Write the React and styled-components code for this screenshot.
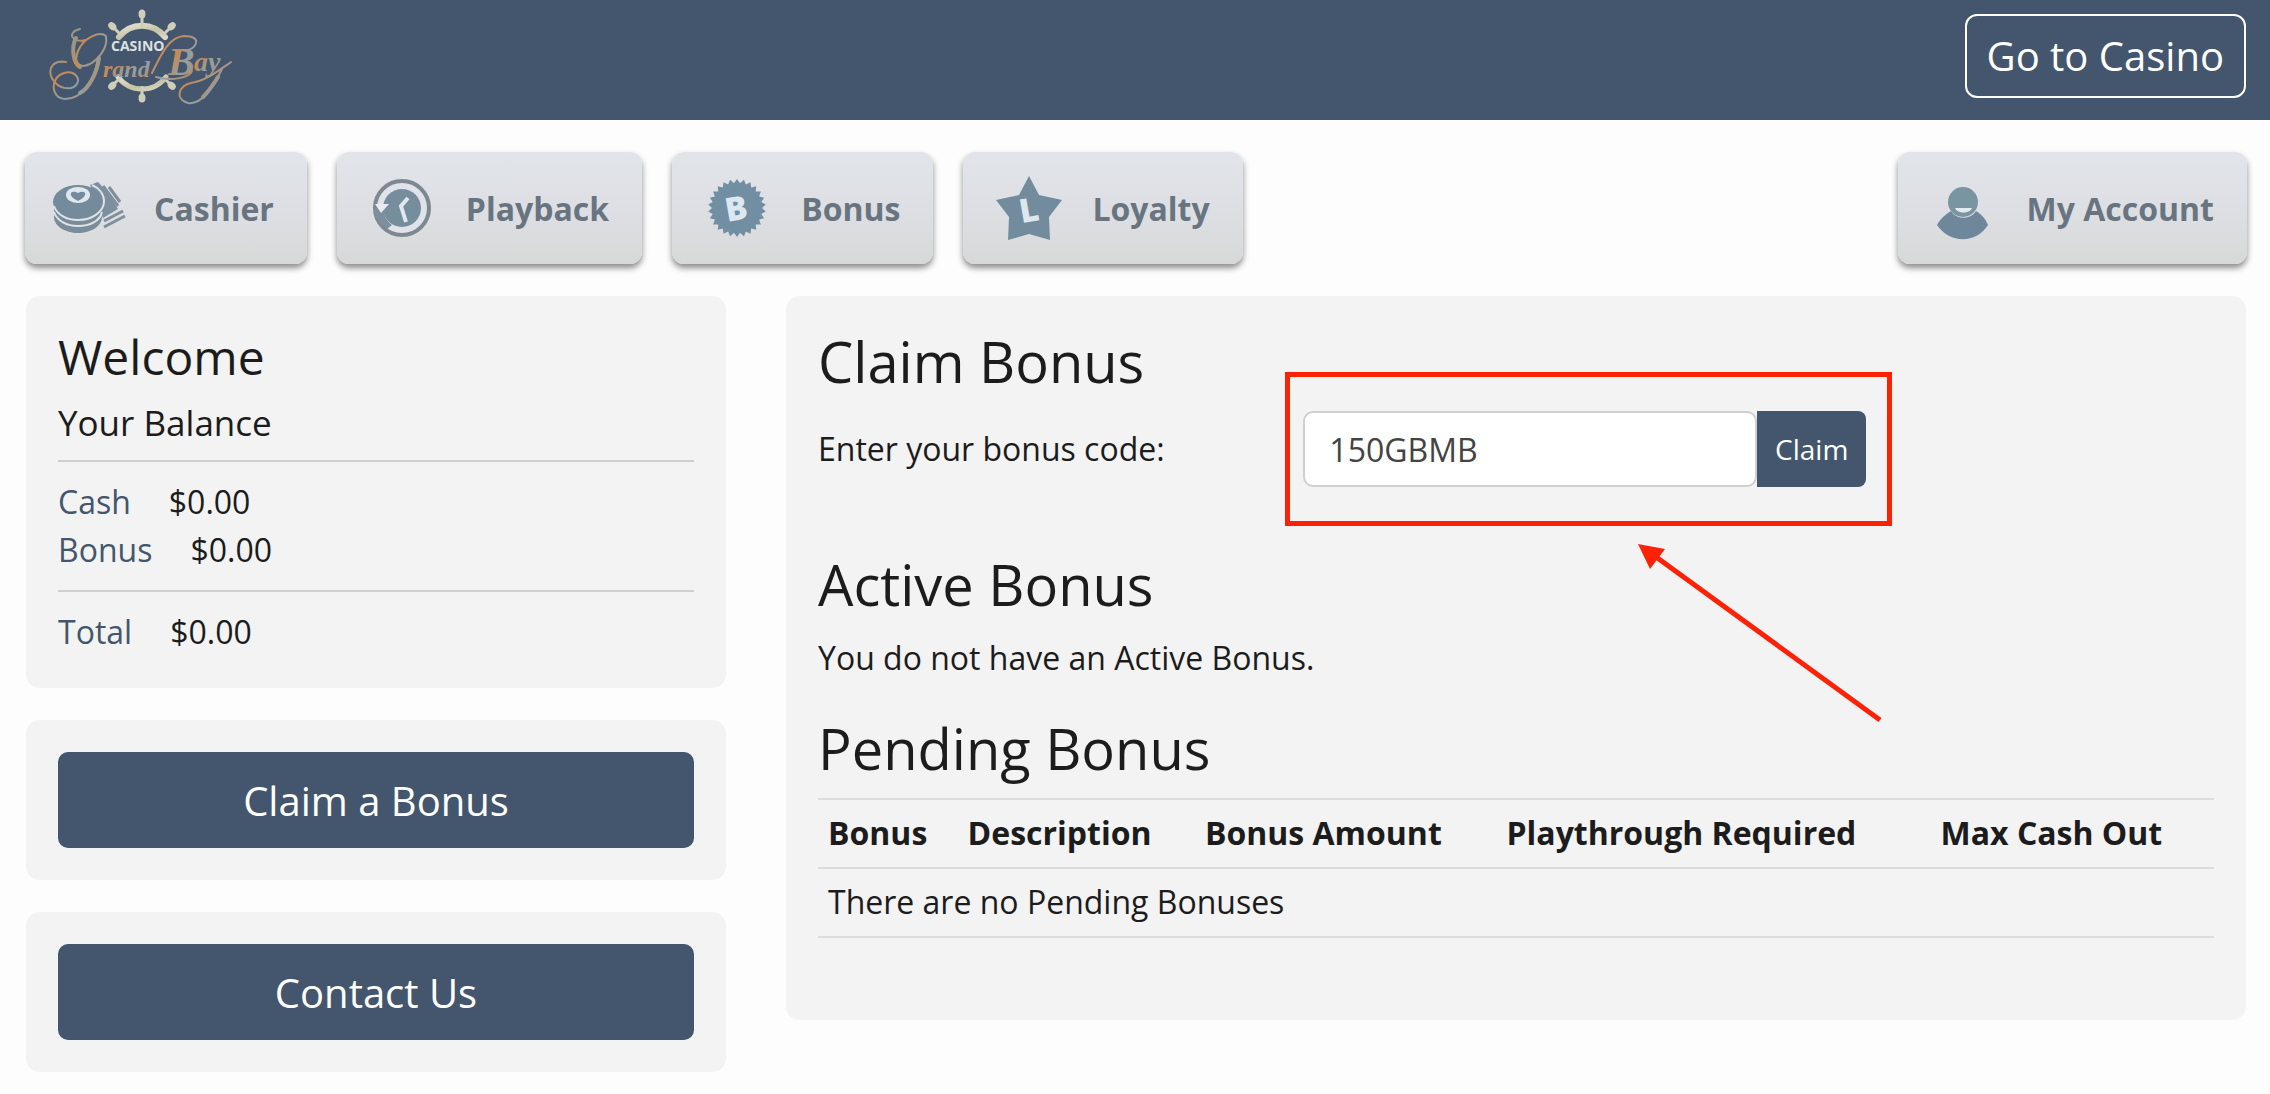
import React, { useState } from "react"

import styled, { createGlobalStyle } from "styled-components"

const navItems = [
  { label: "Cashier", icon: "cashier" },
  { label: "Playback", icon: "playback" },
  { label: "Bonus", icon: "bonus" },
  { label: "Loyalty", icon: "loyalty" },
]

const columns = [
  { label: "Bonus", width: "10%" },
  { label: "Description", width: "17%" },
  { label: "Bonus Amount", width: "21.6%" },
  { label: "Playthrough Required", width: "31.1%" },
  { label: "Max Cash Out", width: "20.3%" },
]

const getBadgePoints = (teeth, outer, inner) => {
  const points = []
  for (let i = 0; i < teeth * 2; i++) {
    const radius = i % 2 === 0 ? outer : inner
    const angle = (Math.PI * i) / teeth
    points.push(`${40 + radius * Math.sin(angle)},${40 - radius * Math.cos(angle)}`)
  }
  return points.join(" ")
}

const Logo = () => (
  <svg width="192" height="106" viewBox="44 2 192 106" role="img" aria-label="Casino Grand Bay">
    <defs>
      <linearGradient id="gold" x1="0" y1="0" x2="1" y2="1">
        <stop offset="0" stopColor="#8f9a90" />
        <stop offset="0.35" stopColor="#c58a5a" />
        <stop offset="0.6" stopColor="#8fa0a4" />
        <stop offset="1" stopColor="#c9854f" />
      </linearGradient>
      <linearGradient id="ivory" x1="0" y1="0" x2="1" y2="1">
        <stop offset="0" stopColor="#e6e3d6" />
        <stop offset="0.6" stopColor="#c3c3a4" />
        <stop offset="1" stopColor="#ded9c8" />
      </linearGradient>
    </defs>
    <g fill="none" stroke="url(#ivory)" strokeLinecap="round">
      <path d="M119 36 A29 29 0 0 1 165 36" strokeWidth="6" />
      <path d="M118 76 A30 30 0 0 0 166 76" strokeWidth="5" />
    </g>
    <g fill="#d0ceb8" stroke="#d0ceb8" strokeWidth="3">
      {[0, 45, 135, 180, 225, 315].map((angle) => (
        <g key={angle} transform={`rotate(${angle} 142 55)`}>
          <path d="M142 25 V14" />
          <ellipse cx="142" cy="13" rx="2" ry="3" />
        </g>
      ))}
    </g>
    <text x="111" y="50" fontFamily="Open Sans, sans-serif" fontWeight="700" fontSize="14" fill="#dfe0e0">
      CASINO
    </text>
    <g fill="none" stroke="url(#gold)" strokeLinecap="round">
      <path
        d="M80 28 C66 31 72 43 86 39 M106 35 C100 30 84 36 78 50 C73 62 80 68 90 63 C99 58 108 46 106 36"
        strokeWidth="2"
      />
      <path
        d="M98 57 C95 80 82 98 65 98 C50 97 50 76 64 72 C79 68 83 84 71 87 C57 89 48 76 51 67 C54 60 60 60 66 61"
        strokeWidth="2"
      />
      <path d="M76 37 C71 46 73 62 80 66 M99 57 C97 73 88 88 80 92" strokeWidth="4" />
      <path d="M152 72 C160 56 168 36 184 35 C202 35 198 46 186 50 M156 76 C172 81 190 76 192 70" strokeWidth="2" />
      <path d="M222 68 C213 86 202 104 188 102 C174 98 179 84 191 82 C206 80 218 70 231 61" strokeWidth="2" />
      <path d="M218 76 C213 84 208 91 203 96" strokeWidth="4" />
    </g>
    <g fill="url(#gold)" fontFamily="Liberation Serif, serif" fontStyle="italic" fontWeight="700">
      <text x="103" y="76" fontSize="24">
        rand
      </text>
      <text x="168" y="74" fontSize="40">
        B
      </text>
      <text x="194" y="70" fontSize="28">
        ay
      </text>
    </g>
  </svg>
)

const CashierIcon = () => (
  <>
    <path d="M40 17 L48 14 L58 25 L68 41 L53 50 Z" fill="#7b8f9e" />
    <path
      d="M53 18 L68 38 M59 19 L70 34 M54 53 L73 43 M54 59 L75 48"
      stroke="#7f8f9b"
      strokeWidth="3"
      fill="none"
    />
    <path d="M4 36 V49 C4 58 15 65 28 65 C41 65 52 58 52 49 V36 Z" fill="#7a8c99" />
    <path d="M4 44 C7 53 17 58 28 58 C40 58 50 53 52 44" fill="none" stroke="#dfe3e8" strokeWidth="2" />
    <ellipse cx="28" cy="34" rx="25" ry="17" fill="#748b9b" />
    <path d="M4 38 C7 47 17 52 28 52 C42 52 54 44 54 33 C54 26 49 20 42 17" fill="none" stroke="#dfe3e8" strokeWidth="2" />
    <ellipse cx="28" cy="27" rx="12" ry="8" fill="#dfe6ed" />
    <path d="M28 33 C16 27 21 21 28 25 C35 21 40 27 28 33 Z" fill="#748b9b" />
  </>
)

const PlaybackIcon = () => (
  <>
    <circle cx="40" cy="40" r="27" fill="#e0e3ea" stroke="#7d8891" strokeWidth="4" />
    <circle cx="40" cy="40" r="19" fill="#768d9e" />
    <path d="M12 42 L18 36 L25 42 L22 44 C23 50 26 54 30 57 L25 61 C18 57 14 50 12 44 Z" fill="#7d8f9c" />
    <path d="M13 36 L27 36 L19 45 Z" fill="#e8ecf1" />
    <path d="M46 30 L39 38 L44 54" fill="none" stroke="#dfe8f0" strokeWidth="4" />
  </>
)

const BonusIcon = () => (
  <>
    <polygon points={getBadgePoints(26, 29, 25)} fill="#718ea3" />
    <g transform="rotate(-10 40 40)">
      <text x="39" y="52" textAnchor="middle" fontFamily="Open Sans, sans-serif" fontWeight="800" fontSize="33" fill="#dce7ef">
        B
      </text>
    </g>
  </>
)

const LoyaltyIcon = () => (
  <>
    <path d="M41 8 L51 27 L74 32 L61 49 L62 72 L41 66 L20 72 L21 49 L8 32 L31 27 Z" fill="#738c9d" />
    <g transform="rotate(-10 40 42)">
      <text x="41" y="54" textAnchor="middle" fontFamily="Open Sans, sans-serif" fontWeight="800" fontSize="33" fill="#dce7ef">
        L
      </text>
    </g>
  </>
)

const AccountIcon = () => (
  <>
    <path d="M14 57 C18 50 23 46 28 43 C33 52 48 52 53 43 C58 46 62 50 65 57 C53 76 27 76 14 57 Z" fill="#6f879b" />
    <circle cx="40" cy="34" r="15" fill="#7895a1" />
    <path d="M32 40 H49 C47 46 34 46 32 40 Z" fill="#e2eaf0" />
  </>
)

const icons = {
  cashier: CashierIcon,
  playback: PlaybackIcon,
  bonus: BonusIcon,
  loyalty: LoyaltyIcon,
  account: AccountIcon,
}

const NavItem = ({ label, icon }) => {
  const Icon = icons[icon]
  return (
    <NavButton type="button">
      <svg width="80" height="80" viewBox="0 0 80 80" aria-hidden="true">
        <Icon />
      </svg>
      {label}
    </NavButton>
  )
}

const App = () => {
  const [code, setCode] = useState("150GBMB")

  return (
    <>
      <GlobalStyle />
      <Header>
        <Logo />
        <CasinoLink href="#casino">Go to Casino</CasinoLink>
      </Header>
      <Nav>
        <NavGroup>
          {navItems.map((item) => (
            <NavItem key={item.label} {...item} />
          ))}
        </NavGroup>
        <NavItem label="My Account" icon="account" />
      </Nav>
      <Main>
        <Sidebar>
          <Panel>
            <WelcomeTitle>Welcome</WelcomeTitle>
            <BalanceTitle>Your Balance</BalanceTitle>
            <Divider />
            <BalanceRow>
              <BalanceLabel>Cash</BalanceLabel>
              <span>$0.00</span>
            </BalanceRow>
            <BalanceRow>
              <BalanceLabel>Bonus</BalanceLabel>
              <span>$0.00</span>
            </BalanceRow>
            <Divider />
            <BalanceRow>
              <BalanceLabel>Total</BalanceLabel>
              <span>$0.00</span>
            </BalanceRow>
          </Panel>
          <Panel>
            <BlockButton type="button">Claim a Bonus</BlockButton>
          </Panel>
          <Panel>
            <BlockButton type="button">Contact Us</BlockButton>
          </Panel>
        </Sidebar>
        <Content>
          <SectionTitle>Claim Bonus</SectionTitle>
          <ClaimForm onSubmit={(e) => e.preventDefault()}>
            <label htmlFor="bonus-code">Enter your bonus code:</label>
            <InputGroup>
              <CodeInput id="bonus-code" value={code} onChange={(e) => setCode(e.target.value)} />
              <ClaimButton type="submit">Claim</ClaimButton>
              <Highlight />
              <Arrow width="246" height="182" viewBox="0 0 246 182" aria-hidden="true">
                <path d="M14 10 L242 176" stroke="#fb2208" strokeWidth="5" />
                <path d="M0 0 L27 5 L12 25 Z" fill="#fb2208" />
              </Arrow>
            </InputGroup>
          </ClaimForm>
          <SectionTitle>Active Bonus</SectionTitle>
          <ActiveText>You do not have an Active Bonus.</ActiveText>
          <SectionTitle>Pending Bonus</SectionTitle>
          <Table>
            <thead>
              <tr>
                {columns.map((column) => (
                  <HeadCell key={column.label} $width={column.width}>
                    {column.label}
                  </HeadCell>
                ))}
              </tr>
            </thead>
            <tbody>
              <tr>
                <Cell colSpan={columns.length}>There are no Pending Bonuses</Cell>
              </tr>
            </tbody>
          </Table>
        </Content>
      </Main>
    </>
  )
}

const GlobalStyle = createGlobalStyle`
  * {
    box-sizing: border-box;
  }

  body {
    margin: 0;
    background-color: #fdfdfd;
    color: #1c1c1c;
    font-family: "Open Sans", "Noto Sans", sans-serif;
    font-size: 32px;
    line-height: 48px;
  }

  button,
  input {
    font-family: inherit;
  }
`

const Header = styled.header`
  display: flex;
  align-items: center;
  justify-content: space-between;
  min-height: 120px;
  padding: 0 24px 8px 44px;
  background-color: #43566e;
`

const CasinoLink = styled.a`
  padding: 16px 20px;
  border: 2px solid #fff;
  border-radius: 12px;
  color: #fff;
  font-size: 40px;
  text-decoration: none;
`

const Nav = styled.nav`
  display: flex;
  justify-content: space-between;
  padding: 32px 23px 32px 25px;
`

const NavGroup = styled.div`
  display: flex;
  gap: 30px;
`

const NavButton = styled.button`
  display: flex;
  align-items: center;
  gap: 24px;
  height: 112px;
  padding: 0 33px 0 25px;
  border: 0;
  border-radius: 12px;
  background: linear-gradient(#e1e5e9, #dedfe4 50%, #d7d9d8);
  box-shadow: 0 4px 6px rgba(0, 0, 0, 0.45);
  color: #687580;
  font-size: 32px;
  font-weight: 700;
`

const Main = styled.main`
  display: grid;
  grid-template-columns: repeat(12, 1fr);
  column-gap: 60px;
  align-items: start;
  padding: 0 24px 22px 26px;
`

const Sidebar = styled.aside`
  grid-column: span 4;
  display: flex;
  flex-direction: column;
  gap: 32px;
`

const Panel = styled.section`
  padding: 32px;
  border-radius: 14px;
  background-color: #f3f3f3;
`

const Content = styled(Panel)`
  grid-column: span 8;
  padding-bottom: 82px;
`

const WelcomeTitle = styled.h2`
  margin: 0 0 16px;
  font-size: 48px;
  font-weight: 400;
  line-height: 58px;
`

const BalanceTitle = styled.h3`
  margin: 0;
  font-size: 35px;
  font-weight: 400;
  line-height: 42px;
`

const Divider = styled.hr`
  margin: 16px 0;
  border: 0;
  border-top: 2px solid #cfcfcf;
`

const BalanceRow = styled.div`
  display: flex;
  gap: 38px;
`

const BalanceLabel = styled.span`
  color: #43566e;
`

const BlockButton = styled.button`
  display: block;
  width: 100%;
  height: 96px;
  border: 0;
  border-radius: 10px;
  background-color: #43566e;
  color: #fff;
  font-size: 40px;
`

const SectionTitle = styled.h1`
  margin: 0 0 16px;
  font-size: 56px;
  font-weight: 400;
  line-height: 67px;
`

const ClaimForm = styled.form`
  display: grid;
  grid-template-columns: 1fr 2fr;
  column-gap: 30px;
  align-items: center;
  margin-bottom: 64px;
`

const InputGroup = styled.div`
  position: relative;
  display: flex;
  max-width: 563px;
`

const CodeInput = styled.input`
  flex: 1;
  min-width: 0;
  height: 76px;
  padding: 0 24px;
  border: 2px solid #cfcfcf;
  border-radius: 10px;
  background-color: #fff;
  color: #444;
  font-size: 32px;
`

const ClaimButton = styled.button`
  padding: 0 18px;
  border: 0;
  border-radius: 0 8px 8px 0;
  background-color: #43566e;
  color: #fff;
  font-size: 28px;
`

const Highlight = styled.div`
  position: absolute;
  inset: -39px -26px -39px -18px;
  border: 5px solid #fb2208;
  pointer-events: none;
`

const Arrow = styled.svg`
  position: absolute;
  top: 133px;
  left: 335px;
  pointer-events: none;
`

const ActiveText = styled.p`
  margin: 0 0 33px;
`

const Table = styled.table`
  width: 100%;
  table-layout: fixed;
  border-spacing: 0;
  border-bottom: 2px solid #dcdcdc;
`

const Cell = styled.td`
  padding: 9px 10px 10px;
  border-top: 2px solid #dcdcdc;
  text-align: left;
`

const HeadCell = styled(Cell).attrs({ as: "th", scope: "col" })`
  width: ${(props) => props.$width};
  font-weight: 700;
  white-space: nowrap;
`

export default App
